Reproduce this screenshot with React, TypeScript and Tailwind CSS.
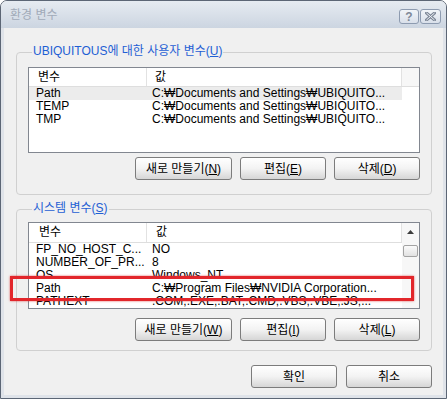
import type { ReactNode } from "react";

type Row = { name: string; value: string };

const userVars: Row[] = [
    { name: "Path", value: "C:₩Documents and Settings₩UBIQUITO..." },
    { name: "TEMP", value: "C:₩Documents and Settings₩UBIQUITO..." },
    { name: "TMP", value: "C:₩Documents and Settings₩UBIQUITO..." },
];

const systemVars: Row[] = [
    { name: "FP_NO_HOST_C...", value: "NO" },
    { name: "NUMBER_OF_PR...", value: "8" },
    { name: "OS", value: "Windows_NT" },
    { name: "Path", value: "C:₩Program Files₩NVIDIA Corporation..." },
    { name: "PATHEXT", value: ".COM;.EXE;.BAT;.CMD;.VBS;.VBE;.JS;..." },
];

function Button({ children, wide }: { children: ReactNode; wide?: boolean }) {
    return (
        <button
            className={
                (wide ? "w-[97px]" : "w-[86px]") +
                " h-[23px] rounded-[3px] border border-[#7c7c7c] bg-gradient-to-b from-white via-[#f3f3f3] to-[#d6d6d6] text-[12px] leading-none text-black"
            }
        >
            {children}
        </button>
    );
}

function Header() {
    return (
        <div className="flex h-[19px] shrink-0 border-b border-[#dedede] bg-white">
            <div className="w-[118px] border-r border-[#e2e2e2] pl-[9px] leading-[18px]">변수</div>
            <div className="w-[255px] border-r border-[#e2e2e2] pl-[8px] leading-[18px]">값</div>
        </div>
    );
}

function Rows({ rows, selected }: { rows: Row[]; selected?: number }) {
    return (
        <div className="flex flex-col">
            {rows.map((r, i) => (
                <div
                    key={i}
                    className={"flex h-[13px] w-[373px] leading-[13px] " + (i === selected ? "bg-[#ececec]" : "")}
                >
                    <div className="w-[118px] overflow-hidden whitespace-nowrap pl-[7px]">{r.name}</div>
                    <div className="w-[255px] overflow-hidden whitespace-nowrap pl-[5px]">{r.value}</div>
                </div>
            ))}
        </div>
    );
}

function GroupButtons({ n, e, d }: { n: string; e: string; d: string }) {
    return (
        <div className="flex justify-end gap-[8px]">
            <Button wide>
                새로 만들기(<u>{n}</u>)
            </Button>
            <Button>
                편집(<u>{e}</u>)
            </Button>
            <Button>
                삭제(<u>{d}</u>)
            </Button>
        </div>
    );
}

export default function App() {
    return (
        <div className="relative h-[399px] w-[447px] bg-white font-['Liberation_Sans','Noto_Sans_CJK_KR',sans-serif] text-[12px] text-black">
            <div className="flex h-full flex-col overflow-hidden rounded-t-[7px] border border-[#5c6675] bg-[#f0f0f0]">
                {/* title bar */}
                <div className="flex h-[27px] shrink-0 items-start bg-gradient-to-b from-[#e6ebf1] via-[#d9e0e9] to-[#ccd5e1] pl-[9px] pr-[5px]">
                    <span className="mt-[6px] flex-1 text-[12px] leading-[16px] text-[#a1aab8]">환경 변수</span>
                    <div className="mt-[8px] flex gap-[1px]">
                        <div className="flex h-[15px] w-[20px] items-center justify-center rounded-[3px] border border-[#8d9bb0] bg-gradient-to-b from-[#f1f4f8] to-[#d9e0ea] text-[12px] font-bold leading-none text-[#7e8898]">
                            ?
                        </div>
                        <div className="flex h-[15px] w-[21px] items-center justify-center rounded-[3px] border border-[#8d9bb0] bg-gradient-to-b from-[#f1f4f8] to-[#d9e0ea]">
                            <svg width="11" height="9" viewBox="0 0 11 9">
                                <path d="M1.5 1 L9.5 8 M9.5 1 L1.5 8" stroke="#7e8898" strokeWidth="3" strokeLinecap="square" />
                                <path d="M1.5 1 L9.5 8 M9.5 1 L1.5 8" stroke="#eef1f5" strokeWidth="1" />
                            </svg>
                        </div>
                    </div>
                </div>

                {/* body */}
                <div className="flex flex-1 flex-col border-x-[3px] border-b-[3px] border-[#dfe3e9] pl-[12px] pr-[11px] pt-[15px]">
                    <fieldset className="rounded-[4px] border border-[#d0d0d0] px-[11px] pb-[14px] pt-[6px]">
                        <legend className="ml-[4px] px-[1px] pb-[2px] leading-[16px] text-[#1f5fd4]">
                            UBIQUITOUS에 대한 사용자 변수(<u>U</u>)
                        </legend>
                        <div className="flex h-[86px] flex-col overflow-hidden border border-[#828790] bg-white">
                            <div className="flex">
                                <Header />
                                <div className="h-[19px] flex-1 border-b border-[#dedede] bg-[#f7f7f7]" />
                            </div>
                            <Rows rows={userVars} selected={0} />
                        </div>
                        <div className="mt-[4px]">
                            <GroupButtons n="N" e="E" d="D" />
                        </div>
                    </fieldset>

                    <fieldset className="mt-[5px] rounded-[4px] border border-[#d0d0d0] px-[11px] pb-[9px] pt-[4px]">
                        <legend className="ml-[4px] px-[1px] pb-[2px] leading-[16px] text-[#1f5fd4]">
                            시스템 변수(<u>S</u>)
                        </legend>
                        <div className="flex h-[87px] overflow-hidden border border-[#828790] bg-white">
                            <div className="flex flex-1 flex-col">
                                <div className="flex h-[20px] shrink-0 border-b border-[#dedede]">
                                    <div className="w-[118px] border-r border-[#e2e2e2] pl-[10px] leading-[19px]">변수</div>
                                    <div className="w-[255px] border-r border-[#e2e2e2] pl-[9px] leading-[19px]">값</div>
                                </div>
                                <Rows rows={systemVars} />
                            </div>
                            <div className="flex w-[17px] shrink-0 flex-col items-center bg-[#f7f7f7]">
                                <div className="flex h-[17px] w-full items-center justify-center">
                                    <svg width="7" height="4" viewBox="0 0 7 4">
                                        <path d="M3.5 0 L7 4 L0 4 Z" fill="#3c3c3c" />
                                    </svg>
                                </div>
                                <div className="mt-[5px] h-[12px] w-[15px] rounded-[2px] border border-[#a3a3a3] bg-gradient-to-b from-[#fbfbfb] to-[#e2e2e2]" />
                            </div>
                        </div>
                        <div className="mt-[9px]">
                            <GroupButtons n="W" e="I" d="L" />
                        </div>
                    </fieldset>

                    <div className="mt-[14px] flex justify-end gap-[9px]">
                        <Button>확인</Button>
                        <Button>취소</Button>
                    </div>
                </div>
            </div>

            {/* red highlight around the Path row */}
            <div className="pointer-events-none absolute left-[10px] top-[276px] h-[25px] w-[404px] border-[3px] border-[#e2262b] shadow-[0_0_2px_rgba(220,30,30,0.7)]" />
        </div>
    );
}
